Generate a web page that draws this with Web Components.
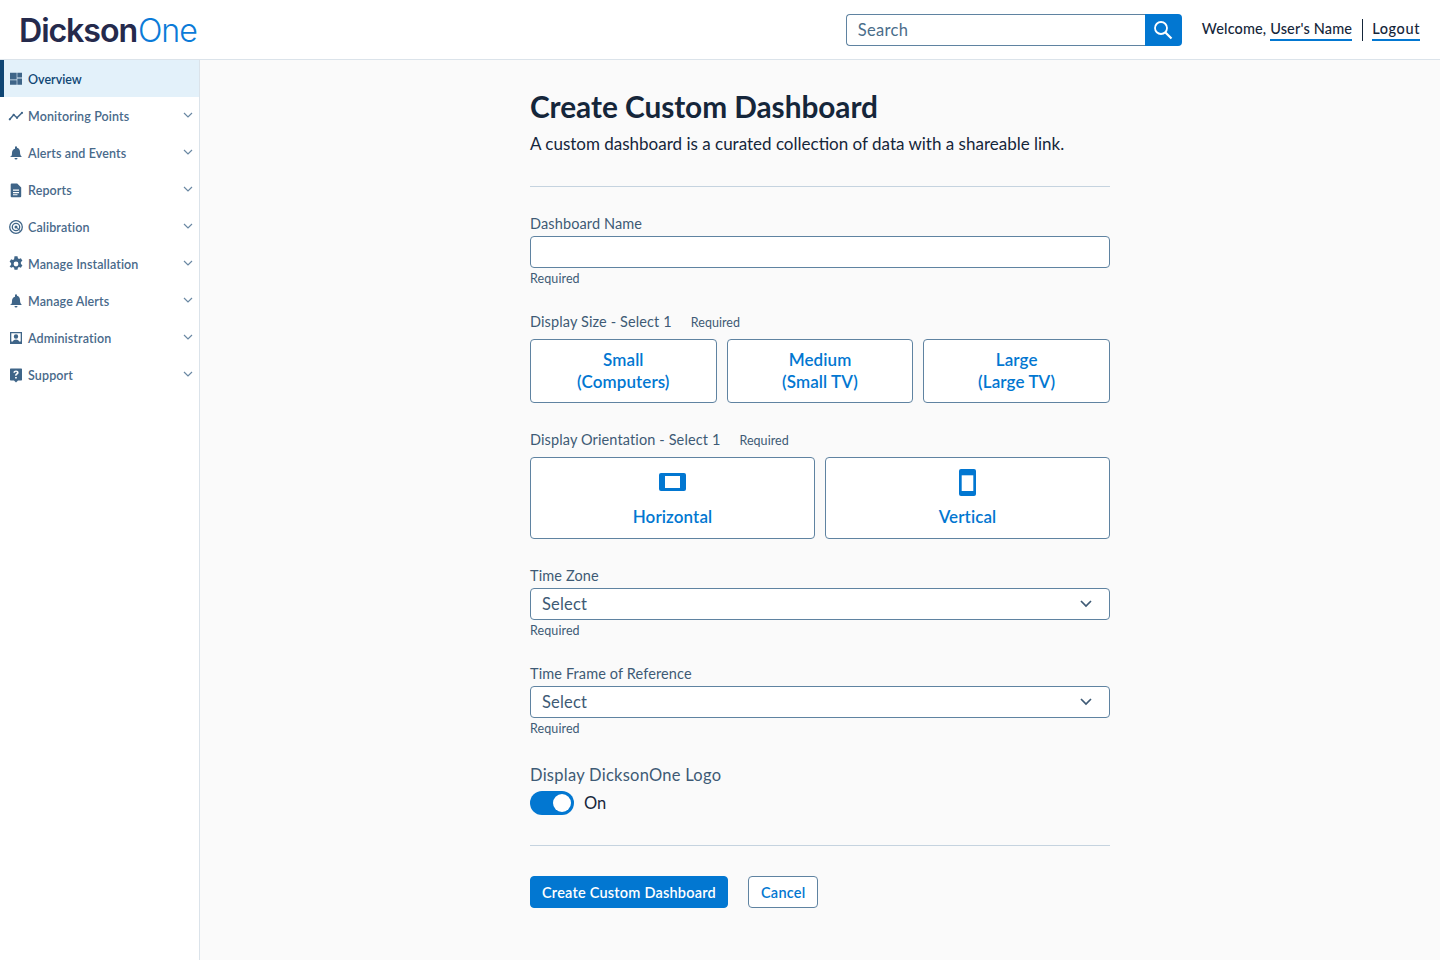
<!DOCTYPE html>
<html lang="en"><head><meta charset="utf-8"><title>Create Custom Dashboard</title>
<style>
html,body{margin:0;padding:0;height:100%}
body{font-family:Lato,"Noto Sans",sans-serif;background:#fafafa;color:#15263a;overflow:hidden}
</style></head><body>
<app-shell>
  <app-header slot="header"></app-header>
  <side-nav slot="nav">
    <nav-item label="Overview" icon="dash" active></nav-item>
    <nav-item label="Monitoring Points" icon="line" caret></nav-item>
    <nav-item label="Alerts and Events" icon="bell" caret></nav-item>
    <nav-item label="Reports" icon="doc" caret></nav-item>
    <nav-item label="Calibration" icon="cal" caret></nav-item>
    <nav-item label="Manage Installation" icon="gear" caret></nav-item>
    <nav-item label="Manage Alerts" icon="bell" caret></nav-item>
    <nav-item label="Administration" icon="admin" caret></nav-item>
    <nav-item label="Support" icon="help" caret></nav-item>
  </side-nav>
  <dashboard-form></dashboard-form>
</app-shell>
<script>
const ICONS={
 dash:'<path d="M2 1.800h6.700v6.700H2zM9.300 1.800H14v4.700H9.300zM2 9.300h6.700v4.400H2zM9.300 7.500H14v6.200H9.300z"/>',
 line:'<g fill="none" stroke="currentColor" stroke-width="1.500"><path d="M1.800 11.300L5.700 6.800 9 9.800 14 4.800"/></g><circle cx="1.800" cy="11.300" r="1.100"/><circle cx="5.700" cy="6.800" r="1.100"/><circle cx="9" cy="9.800" r="1.100"/><circle cx="14" cy="4.800" r="1.100"/>',
 bell:'<path d="M8 1.800a1 1 0 0 1 1 1v.6c1.900.5 3 2.100 3 4.100 0 2.500.6 3.500 1.500 4.300v.9h-11v-.9C3.400 12 4 11 4 8.500c0-2 1.100-3.600 3-4.100V2.800a1 1 0 0 1 1-1zM6.500 13.500h3a1.500 1.500 0 0 1-3 0z" transform="translate(0 -.6)"/>',
 doc:'<path fill-rule="evenodd" d="M3.700 1.500h5.500l4 4v8.800a1 1 0 0 1-1 1H3.700a1 1 0 0 1-1-1V2.500a1 1 0 0 1 1-1zM5 7.500v1.300h6V7.500zM5 10v1.300h6V10zM5 12.300v1h4.500v-1z"/>',
 cal:'<g fill="none" stroke="currentColor"><circle cx="8" cy="8" r="6.300" stroke-width="1.300"/><circle cx="8" cy="8" r="3.700" stroke-width="1.300"/></g><circle cx="8" cy="8" r="1.500"/><path d="M8 8l4 3.500" stroke="currentColor" stroke-width="1"/>',
 gear:'<path fill-rule="evenodd" d="M6.500 1.200h3l.4 2 1.100.6 1.900-.7 1.500 2.600-1.500 1.300v1.800l1.500 1.300-1.500 2.600-1.900-.7-1.100.6-.4 2h-3l-.4-2-1.100-.6-1.900.7L1.600 11.100l1.500-1.300V8L1.600 6.700l1.500-2.600 1.900.7 1.100-.6zM8 6.500a2.400 2.400 0 1 0 0 4.800 2.400 2.400 0 0 0 0-4.800z" transform="translate(0 -.9)"/>',
 admin:'<path fill-rule="evenodd" d="M2 2h12v12H2zM3.300 3.300v8.200h1.500c.4-1.300 1.700-2 3.200-2s2.800.7 3.200 2h1.500V3.300zM8 4.300a2.200 2.200 0 1 1 0 4.400 2.200 2.200 0 0 1 0-4.400z"/>',
 help:'<path fill-rule="evenodd" d="M2.700 1.500h10.600a.7.700 0 0 1 .7.7v10.600a.7.700 0 0 1-.7.700H10L8 15.500 6 13.500H2.700a.7.700 0 0 1-.7-.7V2.200a.7.700 0 0 1 .7-.7zM8 3.500c-1.500 0-2.500.8-2.600 2.200H7c.1-.6.4-.9 1-.9.500 0 .9.300.9.800 0 .4-.3.700-.8 1-.7.400-1 1-1 1.800v.4h1.500v-.3c0-.4.200-.7.800-1.100.7-.4 1.200-1.100 1.200-2C10.600 4.300 9.500 3.500 8 3.500zM7.100 10v1.600h1.700V10z"/>'
};
function def(name,css,html){
  customElements.define(name,class extends HTMLElement{
    constructor(){super();this.attachShadow({mode:'open'})}
    connectedCallback(){
      const h=typeof html==='function'?html(this):html;
      this.shadowRoot.innerHTML='<style>'+css+'</style>'+h;
    }
  });
}
def('app-shell',`
 :host{display:grid;grid-template-columns:200px 1fr;grid-template-rows:60px 1fr;height:960px}
 ::slotted([slot=header]){grid-column:1/3}
`,`<slot name="header"></slot><slot name="nav"></slot><slot></slot>`);
def('app-header',`
 :host{display:flex;align-items:center;background:#fff;border-bottom:1px solid #dbe3ea;box-sizing:border-box;height:60px;padding:0 20px 0 19px}
 .logo{font-size:32.200px;line-height:1;letter-spacing:-1.100px;font-family:Inter,"Noto Sans",sans-serif;white-space:nowrap;padding-top:3px}
 .logo b{font-weight:600;color:#252a4c}.logo span{font-weight:300;color:#0b7bd8;margin-left:1px}
 .sp{flex:1}
 .search{display:flex;width:336px;height:32px;box-sizing:border-box}
 .box{flex:1;border:1px solid #5f83a1;border-right:0;border-radius:4px 0 0 4px;background:#fff;color:#4a6d8a;font-size:16.500px;line-height:30px;padding-left:11px;letter-spacing:.3px}
 .btn{width:37px;background:#0277d1;border-radius:0 4px 4px 0;display:flex;align-items:center;justify-content:center}
 .who{font-size:14.500px;line-height:18px;color:#15263a;margin-left:20px;display:flex;align-items:baseline;font-weight:500;letter-spacing:.13px;white-space:nowrap;padding-top:2px}
 u{text-decoration:none;border-bottom:2px solid #0277d1;padding-bottom:1px;display:inline-block;letter-spacing:.16px}
 u.l{letter-spacing:.6px}
 .bar{width:1px;height:22px;background:#15263a;margin:-2px 9px 0 10px;align-self:center}
`,`<div class="logo"><b>Dickson</b><span>One</span></div><div class="sp"></div>
 <div class="search"><div class="box">Search</div><div class="btn"><svg width="20" height="20" viewBox="0 0 20 20" fill="none" stroke="#fff" stroke-width="1.800"><circle cx="8" cy="8" r="6"/><path d="M12.500 12.500L18.500 18.500" stroke-width="2.200"/></svg></div></div>
 <div class="who"><span>Welcome,&nbsp;</span><u>User's Name</u><i class="bar"></i><u class="l">Logout</u></div>`);
def('side-nav',`
 :host{display:block;background:#fff;border-right:1px solid #dbe3ea;box-sizing:border-box;height:900px}
`,`<slot></slot>`);
def('nav-item',`
 :host{display:flex;align-items:center;height:37px;box-sizing:border-box;padding-left:8px;padding-right:6px;color:#48698a;font-size:12.500px;font-weight:600;letter-spacing:.12px}
 :host([active]){background:#e3f1fa;color:#0f4674;border-left:4px solid #0f4674;padding-left:4px;letter-spacing:0}
 .i{width:16px;height:16px;margin-right:4px;flex:none;fill:#3f6588}
 .l{flex:1;white-space:nowrap;margin-top:1px}
 .c{width:10px;height:10px;fill:none;stroke:#6a88a3;stroke-width:1.200;margin-top:-2px}
`,el=>`<svg class="i" viewBox="0 0 16 16" style="color:#3f6588">${ICONS[el.getAttribute('icon')]}</svg><span class="l">${el.getAttribute('label')}</span>${el.hasAttribute('caret')?'<svg class="c" viewBox="0 0 10 10"><path d="M1 3l4 4 4-4"/></svg>':''}`);
def('field-label',`
 :host{display:block;font-size:14.500px;line-height:18px;color:#3e5a75;letter-spacing:.12px}
 .r{font-size:12.500px;margin-left:19px;letter-spacing:.05px}
`,el=>`<slot></slot>${el.hasAttribute('req')?'<span class="r">Required</span>':''}`);
def('help-text',`:host{display:block;font-size:12.500px;line-height:16px;color:#3e5a75;margin-top:3px;letter-spacing:.1px}`,`<slot></slot>`);
def('text-box',`:host{display:block;height:32px;box-sizing:border-box;background:#fff;border:1px solid #5f83a1;border-radius:4px}`,``);
def('select-box',`
 :host{display:flex;align-items:center;justify-content:space-between;height:32px;box-sizing:border-box;background:#fff;border:1px solid #5f83a1;border-radius:4px;padding:0 16px 0 11px;color:#3e5a75;font-size:16.500px;letter-spacing:.2px}
 svg{width:14px;height:14px;fill:none;stroke:#3e5a75;stroke-width:1.700}
`,`<slot></slot><svg viewBox="0 0 14 14"><path d="M2 4l5 5 5-5"/></svg>`);
def('choice-card',`
 :host{flex:1;display:flex;flex-direction:column;align-items:center;justify-content:center;background:#fff;border:1px solid #5f83a1;border-radius:4px;box-sizing:border-box;color:#0277d1;font-weight:600;font-size:17px;line-height:22px;text-align:center;letter-spacing:.1px}
 .ic{height:28px;margin-bottom:10px;display:flex;align-items:center;justify-content:center}
`,el=>`${el.hasAttribute('icon')?`<div class="ic"><slot name="icon"></slot></div>`:''}<slot></slot>`);
def('toggle-switch',`
 :host{display:flex;align-items:center;gap:10px;font-size:16.500px;color:#15263a}
 .t{width:44px;height:24px;border-radius:12px;background:#0277d1;position:relative}
 .k{position:absolute;right:3px;top:3px;width:18px;height:18px;border-radius:50%;background:#fff}
`,`<span class="t"><span class="k"></span></span><slot></slot>`);
def('action-button',`
 :host{display:flex;align-items:center;justify-content:center;height:32px;box-sizing:border-box;border-radius:4px;font-weight:600;font-size:14.500px;padding:0 11px;background:#fff;border:1px solid #5f83a1;color:#0277d1;letter-spacing:.22px}
 :host([primary]){background:#0277d1;border-color:#0277d1;color:#fff}
`,`<slot></slot>`);
def('dashboard-form',`
 :host{display:block;height:900px;overflow:hidden}
 .w{width:580px;margin:0 auto;padding-top:30px}
 h1{font-size:29.800px;line-height:34px;font-weight:700;margin:0;color:#15263a;letter-spacing:-.05px}
 p{margin:9px 0 0;font-size:17px;line-height:22px;color:#15263a}
 hr{border:0;height:1px;background:#c5d3df;margin:0}
 .row{display:flex;gap:10px}
 field-label.g{margin-bottom:3px}
 .act{display:flex;gap:20px;margin-top:30px}
`,`<div class="w">
 <h1>Create Custom Dashboard</h1>
 <p>A custom dashboard is a curated collection of data with a shareable link.</p>
 <hr style="margin-top:31px">
 <field-label class="g" style="margin-top:28px">Dashboard Name</field-label>
 <text-box></text-box>
 <help-text>Required</help-text>
 <field-label req style="margin-top:26px;margin-bottom:7px">Display Size - Select 1</field-label>
 <div class="row" style="height:64px"><choice-card>Small<br>(Computers)</choice-card><choice-card>Medium<br>(Small TV)</choice-card><choice-card>Large<br>(Large TV)</choice-card></div>
 <field-label req style="margin-top:28px;margin-bottom:7px">Display Orientation - Select 1</field-label>
 <div class="row" style="height:82px">
  <choice-card icon><svg slot="icon" width="27" height="18" viewBox="0 0 27 18"><rect width="27" height="18" rx="2" fill="#0277d1"/><rect x="6" y="3" width="15" height="12" fill="#fff"/></svg>Horizontal</choice-card>
  <choice-card icon><svg slot="icon" width="17" height="27" viewBox="0 0 17 27"><rect width="17" height="27" rx="2" fill="#0277d1"/><rect x="2.700" y="6.300" width="11.600" height="15.700" fill="#fff"/></svg>Vertical</choice-card>
 </div>
 <field-label class="g" style="margin-top:28px">Time Zone</field-label>
 <select-box>Select</select-box>
 <help-text>Required</help-text>
 <field-label class="g" style="margin-top:26px">Time Frame of Reference</field-label>
 <select-box>Select</select-box>
 <help-text>Required</help-text>
 <field-label style="margin-top:28px;margin-bottom:6px;font-size:16.500px;line-height:20px;letter-spacing:.26px">Display DicksonOne Logo</field-label>
 <toggle-switch>On</toggle-switch>
 <hr style="margin-top:30px">
 <div class="act"><action-button primary>Create Custom Dashboard</action-button><action-button style="padding:0 12px">Cancel</action-button></div>
</div>`);
</script>
</body></html>
